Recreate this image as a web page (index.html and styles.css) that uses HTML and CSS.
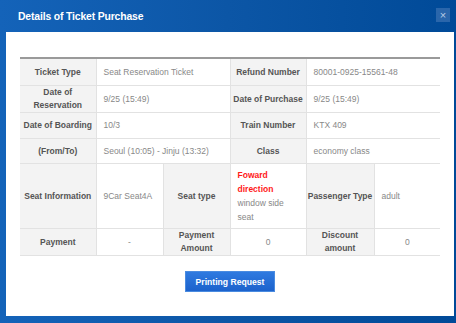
FILE: index.html
```html
<!DOCTYPE html>
<html lang="en">
<head>
  <meta charset="UTF-8">
  <meta name="viewport" content="width=device-width, initial-scale=1.0">
  <title>Details of Ticket Purchase</title>
  <link rel="stylesheet" href="styles.css">
</head>
<body>
  <div class="dialog">
    <header class="dialog-head">
      <h1>Details of Ticket Purchase</h1>
      <button class="close" type="button" aria-label="Close">&times;</button>
    </header>
    <main class="dialog-body">
      <table class="ticket">
        <colgroup>
          <col style="width: 76px">
          <col style="width: 67px">
          <col style="width: 67px">
          <col style="width: 76px">
          <col style="width: 68px">
          <col style="width: 66px">
        </colgroup>
        <tr class="row-1">
          <th>Ticket Type</th>
          <td colspan="2">Seat Reservation Ticket</td>
          <th>Refund Number</th>
          <td colspan="2">80001-0925-15561-48</td>
        </tr>
        <tr class="row-2 sep-gray">
          <th>Date of<br>Reservation</th>
          <td colspan="2">9/25 (15:49)</td>
          <th>Date of Purchase</th>
          <td colspan="2">9/25 (15:49)</td>
        </tr>
        <tr class="row-3">
          <th>Date of Boarding</th>
          <td colspan="2">10/3</td>
          <th>Train Number</th>
          <td colspan="2">KTX 409</td>
        </tr>
        <tr class="row-4 sep-light">
          <th>(From/To)</th>
          <td colspan="2">Seoul (10:05) - Jinju (13:32)</td>
          <th>Class</th>
          <td colspan="2">economy class</td>
        </tr>
        <tr class="row-5 sep-dark">
          <th>Seat Information</th>
          <td>9Car Seat4A</td>
          <th>Seat type</th>
          <td class="seat-type"><strong>Foward direction</strong>window side seat</td>
          <th class="nowrap">Passenger Type</th>
          <td>adult</td>
        </tr>
        <tr class="row-6 sep-light amounts">
          <th>Payment</th>
          <td>-</td>
          <th>Payment<br>Amount</th>
          <td>0</td>
          <th>Discount<br>amount</th>
          <td>0</td>
        </tr>
      </table>
      <div class="actions">
        <button class="btn-print" type="button">Printing Request</button>
      </div>
    </main>
  </div>
</body>
</html>
```

FILE: styles.css
```css
body {
  margin: 0;
  padding: 0;
  font-family: "Liberation Sans", Arial, sans-serif;
  background: #0b55a8;
}
.dialog {
  width: 456px;
  height: 323px;
  display: flex;
  flex-direction: column;
  background: linear-gradient(to right, #1463b9, #0c56a6 50%, #004a98);
}
.dialog-head {
  height: 32px;
  display: flex;
  align-items: center;
  justify-content: space-between;
  padding: 0 6px 0 18px;
  box-sizing: border-box;
}
.dialog-head h1 {
  margin: 0;
  color: white;
  font-size: 10.4px;
  font-weight: bold;
  letter-spacing: -0.15px;
}
.close {
  width: 14px;
  height: 14px;
  padding: 0;
  margin-top: -2px;
  border: none;
  background: #2a66ab;
  color: #b9cde6;
  font-size: 11px;
  line-height: 14px;
  font-family: "Liberation Sans", Arial, sans-serif;
}
.dialog-body {
  flex: 1;
  margin: 0 2px 7px 6px;
  background: white;
  padding: 25px 14px 0 14px;
}
.ticket {
  width: 420px;
  table-layout: fixed;
  border-collapse: collapse;
  border-top: 2px solid #9a9a9a;
  font-size: 8.5px;
}
.ticket th,
.ticket td {
  border: 1px solid #e2e2e2;
  border-top: none;
  padding: 0 7px;
  line-height: 13px;
}
.ticket tr > :first-child {
  border-left: none;
}
.ticket tr > :last-child {
  border-right: none;
}
.ticket th {
  background: #f3f3f3;
  color: #555;
  font-weight: bold;
  text-align: center;
  padding: 0;
}
.ticket td {
  color: #888;
  text-align: left;
}
.ticket .nowrap {
  white-space: nowrap;
}
.row-1 > * { height: 26px; }
.row-2 > * { height: 25px; }
.row-3 > * { height: 25px; }
.row-4 > * { height: 24px; }
.row-5 > * { height: 64px; }
.row-6 > * { height: 25px; }
.sep-gray > * { border-bottom: 2px solid #a0a0a0; }
.sep-light > * { border-bottom: 2px solid #e0e0e0; }
.sep-dark > * { border-bottom: 2px solid #2a2a2a; }
.row-5 td {
  vertical-align: middle;
}
.ticket .seat-type {
  line-height: 14px;
}
.seat-type strong {
  display: block;
  color: #ff1a1a;
  font-weight: bold;
}
.amounts td {
  text-align: center;
}
.actions {
  display: flex;
  justify-content: center;
  margin-top: 15px;
}
.btn-print {
  width: 90px;
  height: 21px;
  padding: 0;
  border: 1px solid #4a8be0;
  background: linear-gradient(#2f7ae0, #1c62cc);
  color: white;
  font-family: "Liberation Sans", Arial, sans-serif;
  font-size: 8.6px;
  font-weight: bold;
}
```
